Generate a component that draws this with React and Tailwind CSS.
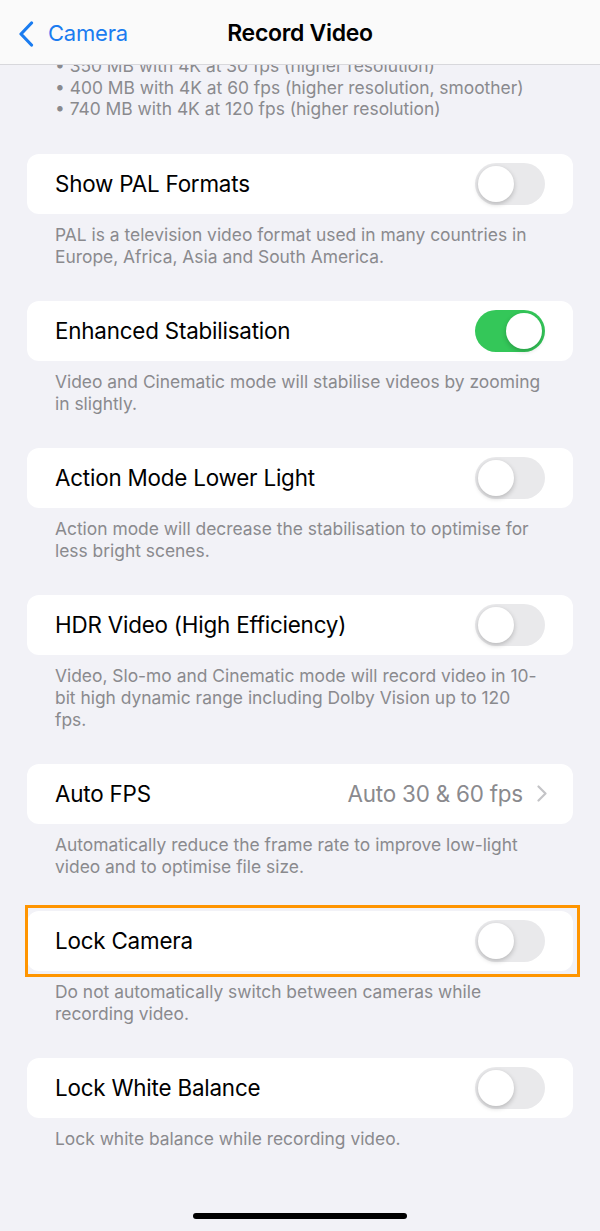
import React from 'react';

const font = { fontFamily: 'Inter, "Noto Sans", sans-serif' };

function Toggle({ on }) {
    return (
        <div className={`w-[70px] h-[42px] rounded-full p-[3px] flex items-center ${on ? 'bg-[#34c759] justify-end' : 'bg-[#e9e9eb] justify-start'}`}>
            <div className="w-[36px] h-[36px] rounded-full bg-white shadow-[0_2px_5px_rgba(0,0,0,0.22)]" />
        </div>
    );
}

function Section({ label, on, value, note, highlight }) {
    return (
        <div className="mb-[33px]">
            <div className="relative mx-[27px]">
                <div className="h-[60px] bg-white rounded-[12px] flex items-center justify-between pl-[28px] pr-[28px]">
                    <span className="text-[22.4px] text-black tracking-[-0.2px]">{label}</span>
                    {value ? (
                        <div className="flex items-center gap-[14px] -mr-[2px]">
                            <span className="text-[22.4px] text-[#8a8a8e] tracking-[-0.2px]">{value}</span>
                            <svg width="10" height="17" viewBox="0 0 10 17" fill="none">
                                <polyline points="1.5,1.5 8.5,8.5 1.5,15.5" stroke="#c4c4c7" strokeWidth="2.2" strokeLinecap="round" strokeLinejoin="round" />
                            </svg>
                        </div>
                    ) : (
                        <Toggle on={on} />
                    )}
                </div>
                {highlight && (
                    <div className="absolute -top-[6px] -bottom-[6px] -left-[2px] -right-[7px] border-[3px] border-[#ff9500] pointer-events-none" />
                )}
            </div>
            <p className="mt-[10px] pl-[55px] pr-[58px] text-[17.4px] leading-[22px] text-[#8a8a8e]">{note}</p>
        </div>
    );
}

const rows = [
    { label: 'Show PAL Formats', on: false, note: 'PAL is a television video format used in many countries in Europe, Africa, Asia and South America.' },
    { label: 'Enhanced Stabilisation', on: true, note: 'Video and Cinematic mode will stabilise videos by zooming in slightly.' },
    { label: 'Action Mode Lower Light', on: false, note: 'Action mode will decrease the stabilisation to optimise for less bright scenes.' },
    { label: 'HDR Video (High Efficiency)', on: false, note: 'Video, Slo-mo and Cinematic mode will record video in 10-bit high dynamic range including Dolby Vision up to 120 fps.' },
    { label: 'Auto FPS', value: 'Auto 30 & 60 fps', note: 'Automatically reduce the frame rate to improve low-light video and to optimise file size.' },
    { label: 'Lock Camera', on: false, highlight: true, note: 'Do not automatically switch between cameras while recording video.' },
    { label: 'Lock White Balance', on: false, note: 'Lock white balance while recording video.' },
];

export default function App() {
    return (
        <div className="w-[600px] h-[1231px] bg-[#f2f2f7] flex flex-col overflow-hidden" style={font}>
            {/* nav bar */}
            <div className="h-[65px] shrink-0 bg-[#fafafa] border-b border-[#d8d8dc] flex items-center relative z-10 pt-[3px]">
                <div className="flex items-center pl-[18px] gap-[14px] text-[#1a7cf0]">
                    <svg width="16" height="26" viewBox="0 0 16 26" fill="none">
                        <polyline points="13.5,2 3,13 13.5,24" stroke="#1a7cf0" strokeWidth="3.2" strokeLinecap="round" strokeLinejoin="round" />
                    </svg>
                    <span className="text-[22px] tracking-[-0.2px]">Camera</span>
                </div>
                <span className="absolute left-0 right-0 text-center text-[23px] font-semibold text-black tracking-[-0.3px] pointer-events-none">Record Video</span>
            </div>

            {/* scrolled content */}
            <div className="flex-1 overflow-hidden">
                <ul className="-mt-[10px] px-[55px] text-[17.4px] leading-[21.5px] text-[#8a8a8e] mb-[34px]">
                    <li>• 350 MB with 4K at 30 fps (higher resolution)</li>
                    <li>• 400 MB with 4K at 60 fps (higher resolution, smoother)</li>
                    <li>• 740 MB with 4K at 120 fps (higher resolution)</li>
                </ul>
                {rows.map((r) => (
                    <Section key={r.label} {...r} />
                ))}
            </div>

            {/* home indicator */}
            <div className="h-[0px] relative">
                <div className="absolute left-[193px] bottom-[12px] w-[214px] h-[6px] rounded-full bg-black" />
            </div>
        </div>
    );
}
